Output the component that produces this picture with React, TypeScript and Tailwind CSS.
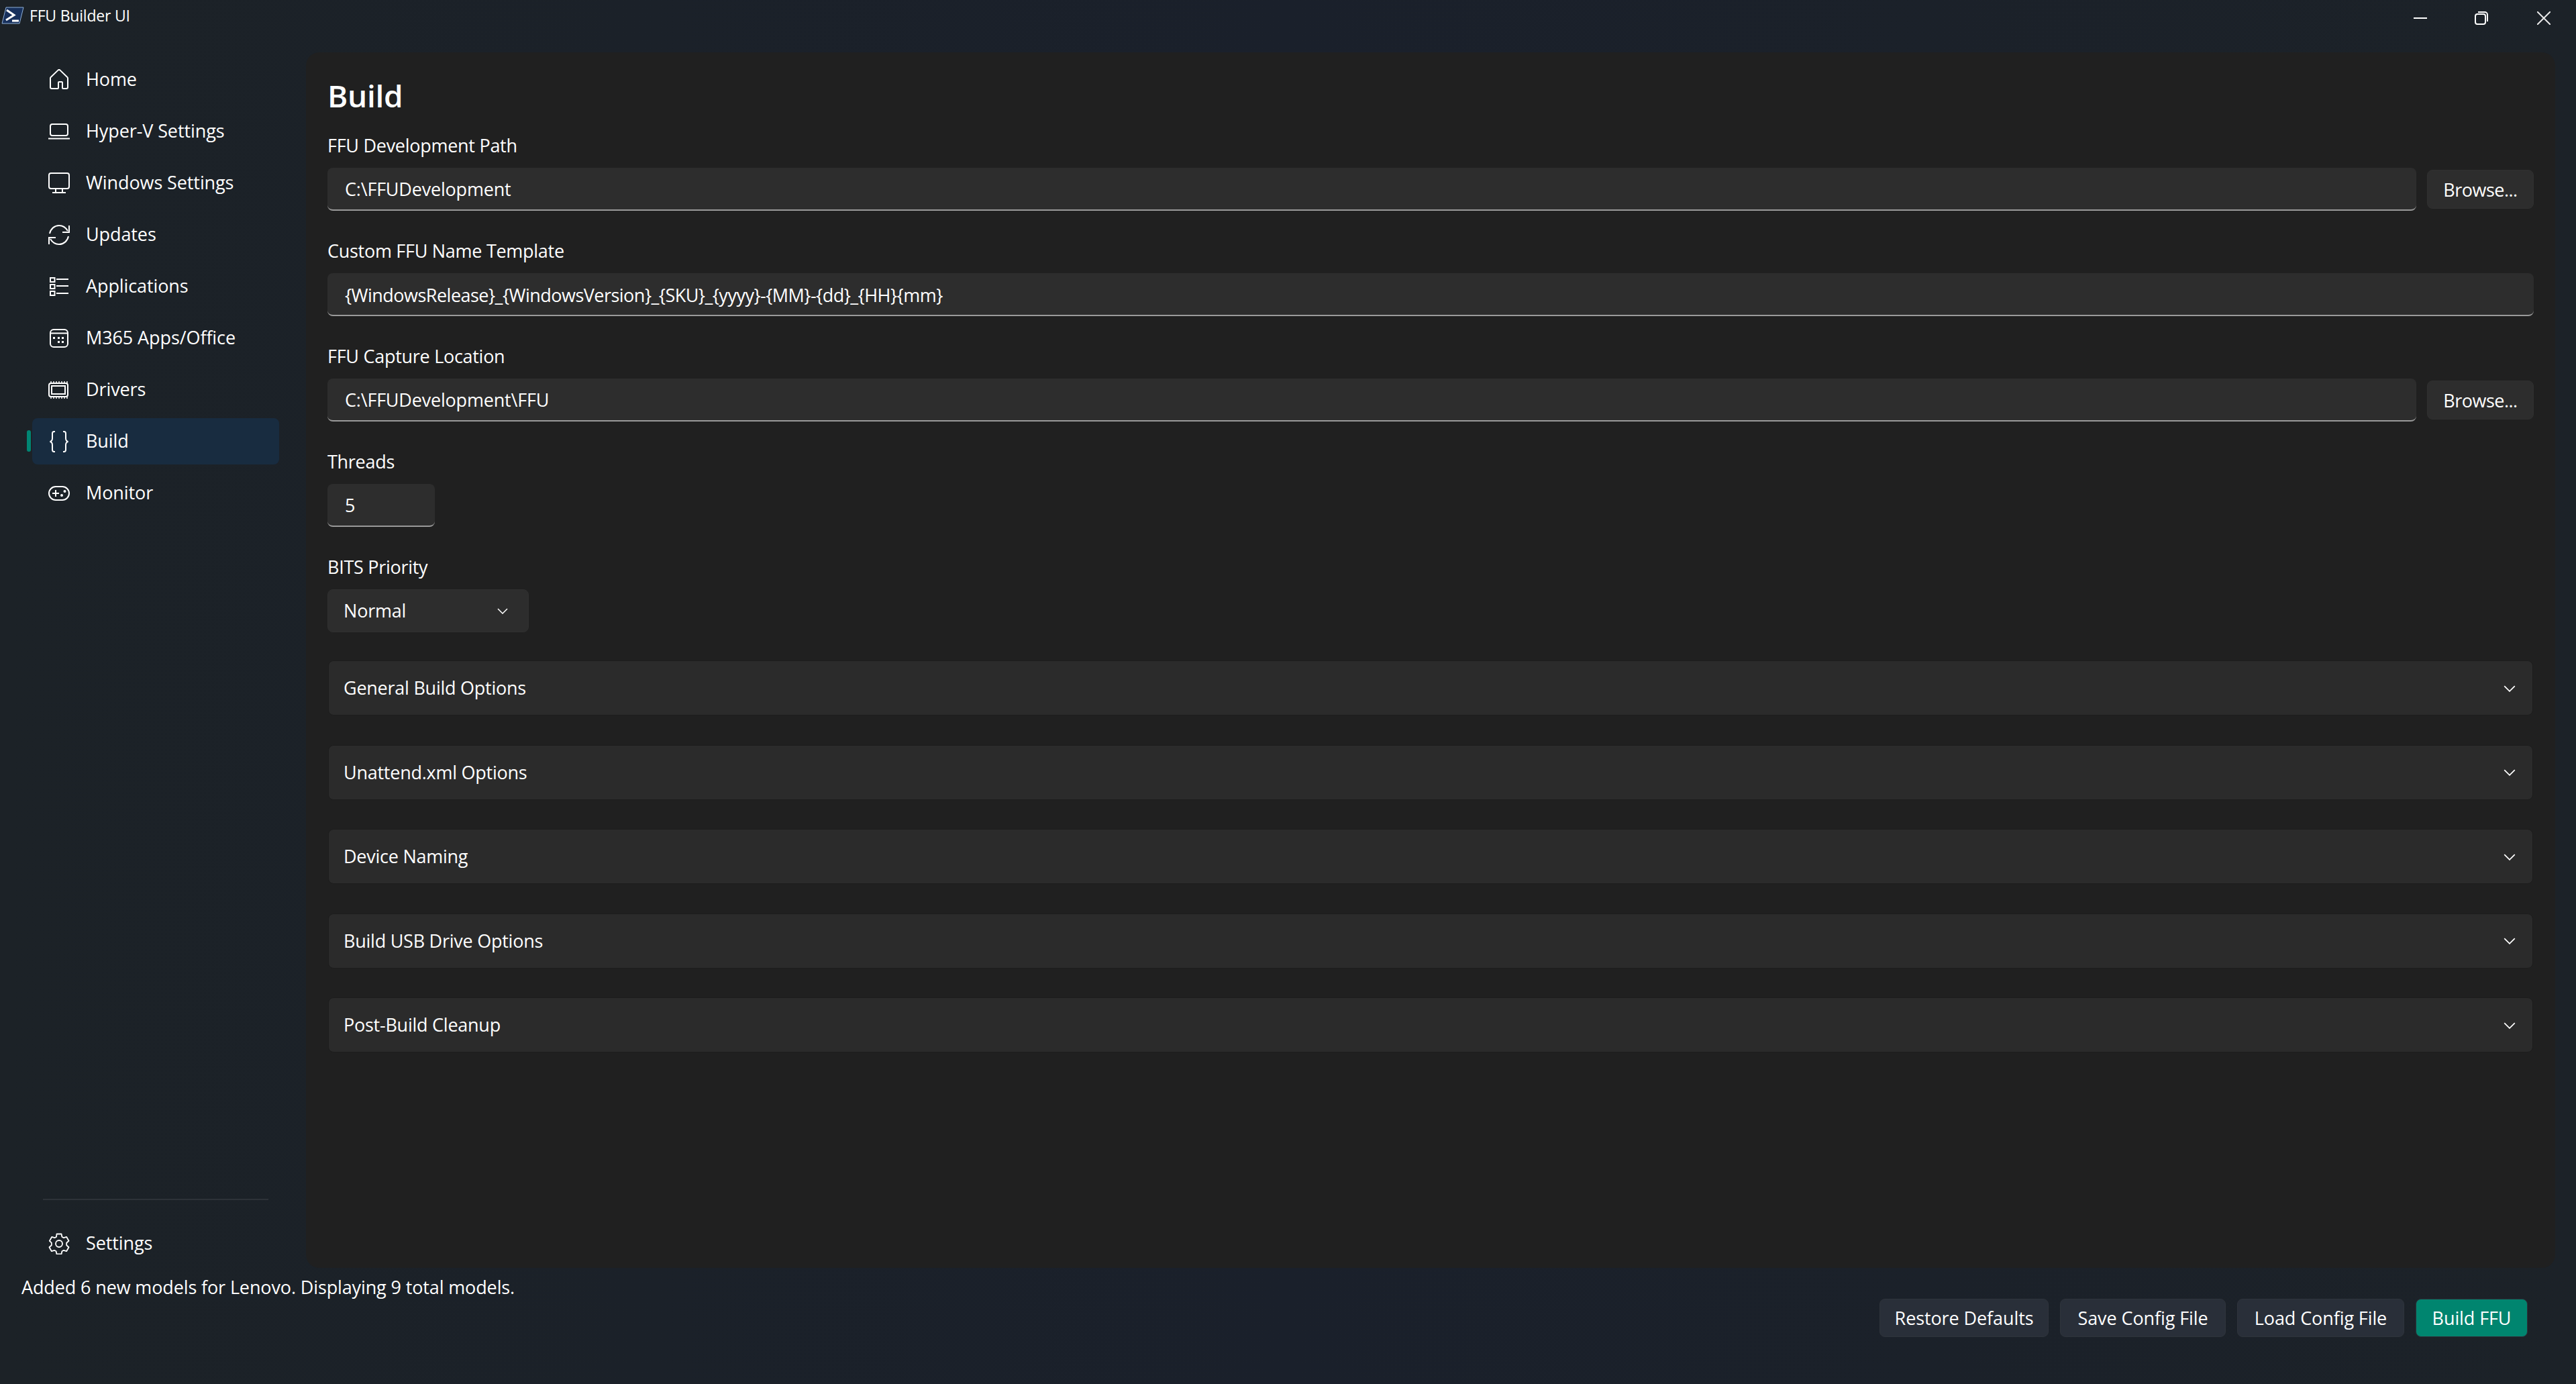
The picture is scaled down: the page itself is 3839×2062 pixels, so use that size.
import type { ReactNode } from "react";

const font = "font-['Open_Sans','Noto_Sans',sans-serif]";

const Icon = ({ children }: { children: ReactNode }) => (
  <svg width={32} height={32} viewBox="0 0 32 32" fill="none" stroke="white" strokeWidth={2} className="shrink-0">
    {children}
  </svg>
);

const HomeIcon = () => (
  <Icon>
    <path d="M3 27V13.400a2 2 0 0 1 .7-1.500L14.700 1.400a2 2 0 0 1 2.600 0l11 10.500a2 2 0 0 1 .7 1.500V27a2 2 0 0 1-2 2h-5a1 1 0 0 1-1-1v-8a1 1 0 0 0-1-1h-4a1 1 0 0 0-1 1v8a1 1 0 0 1-1 1H5a2 2 0 0 1-2-2z" />
  </Icon>
);

const LaptopIcon = () => (
  <Icon>
    <rect x="3" y="5" width="26" height="17" rx="3" />
    <path d="M0 26.500h32" />
  </Icon>
);

const MonitorIcon = () => (
  <Icon>
    <rect x="1" y="1" width="30" height="23" rx="3" />
    <path d="M11 24v6M21 24v6M6 30h20" />
  </Icon>
);

const SyncIcon = () => (
  <Icon>
    <path d="M2 14C3.500 7 9 2 16 2c5.500 0 10 3 13 8" />
    <path d="M31 2v10H21" />
    <path d="M30 18c-1.500 7-7 12-14 12-5.500 0-10-3-13-8" />
    <path d="M1 30V20h10" />
  </Icon>
);

const ListIcon = () => (
  <Icon>
    <rect x="3" y="3" width="6.500" height="6" />
    <rect x="3" y="13" width="6.500" height="6" />
    <rect x="3" y="23" width="6.500" height="6" />
    <path d="M12 5h18M12 15h18M12 26h18" />
  </Icon>
);

const AppsIcon = () => (
  <Icon>
    <rect x="3" y="3" width="26" height="26" rx="5" />
    <path d="M3 8.500h26" />
    <g fill="white" stroke="none">
      <rect x="7" y="14" width="3" height="3" />
      <rect x="14" y="14" width="3" height="3" />
      <rect x="20" y="14" width="3" height="3" />
      <rect x="14" y="20" width="3" height="3" />
      <rect x="20" y="20" width="3" height="3" />
    </g>
  </Icon>
);

const ChipIcon = () => (
  <Icon>
    <rect x="1" y="6" width="28" height="20" rx="3" />
    <rect x="5" y="10" width="20" height="12" />
    <path d="M4 6V3M8 6V3M12 6V3M16 6V3M20 6V3M24 6V3M28 6V3M4 29v-3M8 29v-3M12 29v-3M16 29v-3M20 29v-3M24 29v-3M28 29v-3" strokeWidth={1.500} />
  </Icon>
);

const BracesIcon = () => (
  <Icon>
    <path d="M10 1H8.500C6.500 1 6 2.500 6 4v7c0 3-1 4.500-3.500 5C5 16.500 6 18 6 21v7c0 1.500.5 3 2.500 3H10" />
    <path d="M22 1h1.500C25.500 1 26 2.500 26 4v7c0 3 1 4.500 3.500 5-2.500.5-3.500 2-3.500 5v7c0 1.500-.5 3-2.500 3H22" />
  </Icon>
);

const GamepadIcon = () => (
  <Icon>
    <rect x="1" y="6" width="30" height="20" rx="10" />
    <path d="M6 16h10M11 11v10" />
    <circle cx="24.500" cy="13" r="2" fill="white" stroke="none" />
    <circle cx="20" cy="19" r="2" fill="white" stroke="none" />
  </Icon>
);

const GearIcon = () => (
  <Icon>
    <path d="M12.500 1.500h7l.9 4.300 2.500 1.400 4.200-1.400 3.400 6-3.300 2.900v3.600l3.300 2.900-3.400 6-4.200-1.400-2.500 1.400-.9 4.300h-7l-.9-4.300-2.500-1.400-4.200 1.400-3.400-6 3.300-2.900v-3.600L1.900 11.800l3.400-6 4.200 1.400 2.500-1.400z" strokeLinejoin="round" strokeWidth={1.800} />
    <circle cx="16" cy="16" r="5" strokeWidth={1.800} />
  </Icon>
);

const Chevron = ({ big }: { big?: boolean }) => (
  <svg width={big ? 18 : 16} height={big ? 10 : 9} viewBox="0 0 16 9" fill="none" stroke="white" strokeWidth={1.500} className="shrink-0">
    <path d="M1 1l7 7 7-7" />
  </svg>
);

const AppLogo = () => (
  <svg width={34} height={26} viewBox="0 0 34 26" className="shrink-0">
    <path d="M7 1h26l-6 24H1z" fill="#17305c" stroke="#8fb0d8" strokeWidth={1} />
    <path d="M8 5l11 7.500L7 20" fill="none" stroke="white" strokeWidth={3} />
    <path d="M16 21h10" stroke="white" strokeWidth={3} />
  </svg>
);

const NavItem = ({ icon, label, active }: { icon: ReactNode; label: string; active?: boolean }) => (
  <div className={`relative flex h-[69px] w-[368px] items-center gap-[24px] rounded-lg pl-[24px] text-[27px] tracking-[-0.1px] text-white ${active ? "bg-[#182c40]" : ""}`}>
    {active && <div className="absolute left-[-8px] top-[18px] h-[32px] w-[6px] rounded-full bg-[#008573]" />}
    {icon}
    <span>{label}</span>
  </div>
);

const Field = ({ label, value, browse, width, tight }: { label: string; value: string; browse?: boolean; width?: string; tight?: boolean }) => (
  <div className="flex flex-col">
    <div className="flex h-[36px] items-center text-[27px] tracking-[-0.28px] text-white">{label}</div>
    <div className="mt-[15px] flex items-center gap-[16px]">
      <input
        readOnly
        value={value}
        className={`h-[64px] rounded-lg border-b-2 border-[#9a9a9a] bg-[#2d2d2d] pl-[26px] text-[27px] text-white outline-none ${tight ? "pt-[2px] tracking-[-0.52px]" : "tracking-[-0.2px]"} ${width ?? "min-w-0 flex-1"}`}
      />
      {browse && (
        <button className="h-[58px] w-[159px] shrink-0 rounded-lg border border-[#303030] bg-[#2d2d2d] pt-[2px] text-[27px] tracking-[-0.5px] text-white">Browse...</button>
      )}
    </div>
  </div>
);

const Expander = ({ label }: { label: string }) => (
  <div className="mx-[1px] flex h-[82px] items-center justify-between rounded-lg border border-[#1d1d1d] bg-[#2b2b2b] pl-[22px] pr-[25px] pt-[1px] text-[27px] tracking-[-0.25px] text-white">
    <span>{label}</span>
    <Chevron big />
  </div>
);

const FooterButton = ({ label, width, primary }: { label: string; width: string; primary?: boolean }) => (
  <button
    className={`flex h-[57px] items-center justify-center rounded-lg border pt-[2px] text-[27px] tracking-[-0.1px] text-white ${width} ${
      primary ? "border-[#2d323a] bg-[#00856f]" : "border-[#2f343c] bg-[#292f39]"
    }`}
  >
    {label}
  </button>
);

export default function App() {
  const expanders = ["General Build Options", "Unattend.xml Options", "Device Naming", "Build USB Drive Options", "Post-Build Cleanup"];

  return (
    <div className={`flex h-[2062px] w-[3839px] flex-col overflow-hidden bg-linear-to-r from-[#1c2227] via-[#1a202b] to-[#1c2228] ${font}`}>
      {/* title bar */}
      <div className="flex h-[78px] shrink-0 items-start justify-between">
        <div className="flex items-center gap-[8px] pl-[2px] pt-[6px] text-[23px] tracking-[-0.2px] text-white">
          <AppLogo />
          <span>FFU Builder UI</span>
        </div>
        <div className="flex items-center gap-[71px] pr-[38px] pt-[17px]">
          <svg width={20} height={20} viewBox="0 0 20 20" stroke="white" strokeWidth={2} fill="none">
            <path d="M0 10h20" />
          </svg>
          <svg width={20} height={20} viewBox="0 0 20 20" stroke="white" strokeWidth={2} fill="none">
            <rect x="1" y="4" width="15" height="15" rx="3" />
            <path d="M5 1h10a4 4 0 0 1 4 4v10" />
          </svg>
          <svg width={20} height={20} viewBox="0 0 20 20" stroke="#e8e8e8" strokeWidth={2} fill="none" className="ml-[2px]">
            <path d="M0 0l20 20M20 0L0 20" />
          </svg>
        </div>
      </div>

      <div className="flex min-h-0 flex-1">
        {/* nav */}
        <div className="flex w-[456px] shrink-0 flex-col pl-[48px]">
          <div className="flex flex-col gap-[8px] pt-[6px]">
            <NavItem icon={<HomeIcon />} label="Home" />
            <NavItem icon={<LaptopIcon />} label="Hyper-V Settings" />
            <NavItem icon={<MonitorIcon />} label="Windows Settings" />
            <NavItem icon={<SyncIcon />} label="Updates" />
            <NavItem icon={<ListIcon />} label="Applications" />
            <NavItem icon={<AppsIcon />} label="M365 Apps/Office" />
            <NavItem icon={<ChipIcon />} label="Drivers" />
            <NavItem icon={<BracesIcon />} label="Build" active />
            <NavItem icon={<GamepadIcon />} label="Monitor" />
          </div>
          <div className="mt-auto ml-[16px] h-[2px] w-[336px] bg-[#2d3238]" />
          <div className="mb-[2px] mt-[30px]">
            <NavItem icon={<GearIcon />} label="Settings" />
          </div>
        </div>

        {/* main panel */}
        <div className="mr-[31px] flex min-w-0 flex-1 flex-col rounded-[20px] bg-[#202020] px-[32px]">
          <h1 className="mt-[34px] flex h-[60px] items-center text-[46px] font-semibold tracking-[-0.3px] text-white">Build</h1>
          <div className="mt-[27px] flex flex-col gap-[42px]">
            <Field label="FFU Development Path" value="C:\FFUDevelopment" browse />
            <Field label="Custom FFU Name Template" value="{WindowsRelease}_{WindowsVersion}_{SKU}_{yyyy}-{MM}-{dd}_{HH}{mm}" tight />
            <Field label="FFU Capture Location" value="C:\FFUDevelopment\FFU" browse />
            <Field label="Threads" value="5" width="w-[160px]" />
            <div className="flex flex-col">
              <div className="flex h-[36px] items-center text-[27px] tracking-[-0.28px] text-white">BITS Priority</div>
              <div className="mt-[15px] flex h-[64px] w-[300px] items-center justify-between rounded-lg border border-[#303030] bg-[#2d2d2d] pl-[23px] pr-[30px] text-[27px] tracking-[-0.2px] text-white">
                <span>Normal</span>
                <Chevron />
              </div>
            </div>
          </div>
          <div className="mt-[42px] flex flex-col gap-[43.5px]">
            {expanders.map((e) => (
              <Expander key={e} label={e} />
            ))}
          </div>
        </div>
      </div>

      {/* footer */}
      <div className="flex h-[173px] shrink-0 items-start justify-between">
        <div className="pl-[32px] pt-[9px] text-[27px] tracking-[-0.13px] text-white">Added 6 new models for Lenovo. Displaying 9 total models.</div>
        <div className="flex gap-[17px] pr-[72px] pt-[46px]">
          <FooterButton label="Restore Defaults" width="w-[252px]" />
          <FooterButton label="Save Config File" width="w-[247px]" />
          <FooterButton label="Load Config File" width="w-[249px]" />
          <FooterButton label="Build FFU" width="w-[167px]" primary />
        </div>
      </div>
    </div>
  );
}
